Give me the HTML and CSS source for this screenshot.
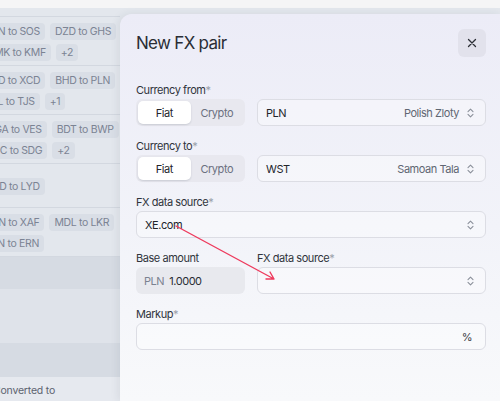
FILE: index.html
```html
<!DOCTYPE html>
<html lang="en">
<head>
    <meta charset="UTF-8">
    <meta name="viewport" content="width=device-width, initial-scale=1.0">
    <title>New FX pair</title>
    <link rel="stylesheet" href="styles.css">
</head>
<body>

    <div class="topbar"></div>

    <!-- Pairs table behind the drawer -->
    <div class="pairs">
        <div class="pair-row pair-head"></div>
        <div class="pair-row">
            <div class="tag-line"><span class="tag">AFN to SOS</span><span class="tag">DZD to GHS</span></div>
            <div class="tag-line"><span class="tag">MMK to KMF</span><span class="tag">+2</span></div>
        </div>
        <div class="pair-row">
            <div class="tag-line"><span class="tag">BSD to XCD</span><span class="tag">BHD to PLN</span></div>
            <div class="tag-line"><span class="tag">ALL to TJS</span><span class="tag">+1</span></div>
        </div>
        <div class="pair-row">
            <div class="tag-line"><span class="tag">MGA to VES</span><span class="tag">BDT to BWP</span></div>
            <div class="tag-line"><span class="tag">CUC to SDG</span><span class="tag">+2</span></div>
        </div>
        <div class="pair-row single">
            <div class="tag-line"><span class="tag">AUD to LYD</span></div>
        </div>
        <div class="pair-row">
            <div class="tag-line"><span class="tag">AZN to XAF</span><span class="tag">MDL to LKR</span></div>
            <div class="tag-line"><span class="tag">BTN to ERN</span></div>
        </div>
        <div class="band dark"></div>
        <div class="band light"></div>
        <div class="band dark short"></div>
        <div class="band foot"><span class="foot-text">Converted to</span></div>
    </div>

    <aside class="drawer">
        <div class="drawer-head">
            <h2 class="drawer-title">New FX pair</h2>
            <button class="close-btn" aria-label="Close">
                <svg width="10" height="10" viewBox="0 0 10 10">
                    <path d="M1.5 1.5L8.5 8.5M8.5 1.5L1.5 8.5" stroke="#2c2f36" stroke-width="1.3" stroke-linecap="round"/>
                </svg>
            </button>
        </div>

        <div class="form">
            <div class="field">
                <div class="field-label">Currency from<span class="req">*</span></div>
                <div class="split">
                    <div class="segmented">
                        <span class="seg active">Fiat</span>
                        <span class="seg">Crypto</span>
                    </div>
                    <div class="select">
                        <span class="select-code">PLN</span>
                        <span class="select-name">Polish Zloty</span>
                        <svg class="chevron" width="7" height="10" viewBox="0 0 7 10">
                            <path d="M1 3.6L3.5 1.2L6 3.6M1 6.4L3.5 8.8L6 6.4" fill="none" stroke="#8b909a" stroke-width="1.1" stroke-linecap="round" stroke-linejoin="round"/>
                        </svg>
                    </div>
                </div>
            </div>

            <div class="field">
                <div class="field-label">Currency to<span class="req">*</span></div>
                <div class="split">
                    <div class="segmented">
                        <span class="seg active">Fiat</span>
                        <span class="seg">Crypto</span>
                    </div>
                    <div class="select">
                        <span class="select-code">WST</span>
                        <span class="select-name">Samoan Tala</span>
                        <svg class="chevron" width="7" height="10" viewBox="0 0 7 10">
                            <path d="M1 3.6L3.5 1.2L6 3.6M1 6.4L3.5 8.8L6 6.4" fill="none" stroke="#8b909a" stroke-width="1.1" stroke-linecap="round" stroke-linejoin="round"/>
                        </svg>
                    </div>
                </div>
            </div>

            <div class="field">
                <div class="field-label">FX data source<span class="req">*</span></div>
                <div class="select">
                    <span class="select-code">XE.com</span>
                    <svg class="chevron" width="7" height="10" viewBox="0 0 7 10">
                        <path d="M1 3.6L3.5 1.2L6 3.6M1 6.4L3.5 8.8L6 6.4" fill="none" stroke="#8b909a" stroke-width="1.1" stroke-linecap="round" stroke-linejoin="round"/>
                    </svg>
                </div>
            </div>

            <div class="split">
                <div class="field">
                    <div class="field-label">Base amount</div>
                    <div class="amount">
                        <span class="amount-cur">PLN</span>
                        <span class="amount-val">1.0000</span>
                    </div>
                </div>
                <div class="field">
                    <div class="field-label">FX data source<span class="req">*</span></div>
                    <div class="select">
                        <svg class="chevron" width="7" height="10" viewBox="0 0 7 10">
                            <path d="M1 3.6L3.5 1.2L6 3.6M1 6.4L3.5 8.8L6 6.4" fill="none" stroke="#8b909a" stroke-width="1.1" stroke-linecap="round" stroke-linejoin="round"/>
                        </svg>
                    </div>
                </div>
            </div>

            <div class="field">
                <div class="field-label">Markup<span class="req">*</span></div>
                <div class="select">
                    <span class="suffix">%</span>
                </div>
            </div>
        </div>
    </aside>

    <!-- annotation arrow -->
    <svg class="pointer" width="500" height="401" viewBox="0 0 500 401">
        <path d="M176 226L274 279M274 279L266 279M274 279L270 272" fill="none" stroke="#ee3a5d" stroke-width="1.4" stroke-linecap="round" stroke-linejoin="round"/>
    </svg>

</body>
</html>
```

FILE: styles.css
```css
/* Base */
* {
    box-sizing: border-box;
}

body {
    margin: 0;
    width: 500px;
    height: 401px;
    overflow: hidden;
    position: relative;
    font-family: Inter, "Noto Sans", sans-serif;
    background-color: #e3e7ed;
    color: #2b2e36;
}

.topbar {
    height: 8px;
    background-color: #f5f5f6;
}

/* Pairs table */
.pairs {
    width: 120px;
    overflow: hidden;
}

.pair-row {
    border-bottom: 1px solid #d3d8e0;
    padding: 6px 0 4px;
    display: flex;
    flex-direction: column;
    gap: 4px;
}

.pair-head {
    height: 9px;
    padding: 0;
}

.pair-row.single {
    padding: 14px 0 12px;
}

.tag-line {
    display: flex;
    gap: 5px;
    margin-left: -20px;
}

.tag {
    height: 17px;
    line-height: 17px;
    padding: 0 5px;
    border-radius: 4px;
    background-color: #d9dee6;
    color: #7b8393;
    font-size: 10.5px;
    letter-spacing: -0.35px;
    white-space: nowrap;
}

.band {
    height: 32px;
}

.band.dark {
    background-color: #d6dbe3;
}

.band.short {
    height: 34px;
}

.band.light {
    height: 54px;
    background-color: #dfe3ea;
}

.band.foot {
    height: 30px;
    background-color: #e6e9ef;
    padding-top: 7px;
}

.foot-text {
    display: block;
    margin-left: -7px;
    font-size: 10.5px;
    letter-spacing: -0.2px;
    color: #5c6370;
}

/* Drawer */
.drawer {
    position: absolute;
    left: 120px;
    top: 14px;
    right: 0;
    bottom: 0;
    border-radius: 12px 0 0 0;
    background: linear-gradient(180deg, #ececf7 0%, #f2f3f9 55%, #f8f9fb 100%);
    box-shadow: -2px 0 8px rgba(40, 50, 70, 0.08);
    letter-spacing: -0.45px;
}

.drawer-head {
    display: flex;
    justify-content: space-between;
    align-items: center;
    padding: 15px 14px 0 16px;
}

.drawer-title {
    margin: 0;
    font-size: 17px;
    font-weight: 400;
    line-height: 28px;
    letter-spacing: -0.7px;
    color: #2a2d35;
}

.close-btn {
    width: 28px;
    height: 28px;
    border: none;
    border-radius: 6px;
    background-color: #e2e2ec;
    display: flex;
    align-items: center;
    justify-content: center;
    padding: 0;
}

.form {
    padding: 26px 14px 0 16px;
}

.field {
    margin-bottom: 13px;
}

.field-label {
    font-size: 11px;
    line-height: 14px;
    margin-bottom: 2px;
    color: #30343c;
}

.req {
    color: #9ba0aa;
}

.split {
    display: grid;
    grid-template-columns: 109px 1fr;
    gap: 12px;
}

.split .field {
    min-width: 0;
}

/* Fiat / Crypto toggle */
.segmented {
    height: 27px;
    padding: 2px;
    border-radius: 6px;
    background-color: #e8e8ef;
    display: grid;
    grid-template-columns: 1fr 1fr;
}

.seg {
    display: flex;
    align-items: center;
    justify-content: center;
    font-size: 11px;
    color: #6b7080;
    border-radius: 5px;
}

.seg.active {
    background-color: #fff;
    color: #23262d;
    box-shadow: 0 1px 2px rgba(30, 40, 60, 0.15);
}

/* Select-like inputs */
.select {
    height: 27px;
    border: 1px solid #dcdde4;
    border-radius: 6px;
    background-color: rgba(255, 255, 255, 0.35);
    display: flex;
    align-items: center;
    padding: 0 11px 0 8px;
    font-size: 11px;
}

.select-code {
    color: #22252b;
}

.select-name {
    margin-left: auto;
    color: #606672;
}

.chevron {
    margin-left: 8px;
    flex-shrink: 0;
}

.select-code + .chevron {
    margin-left: auto;
}

.select > .chevron:only-child,
.suffix {
    margin-left: auto;
}

.suffix {
    color: #3b3f47;
    margin-right: 2px;
}

.amount {
    height: 27px;
    border-radius: 6px;
    background-color: #e8e9ee;
    display: flex;
    align-items: center;
    padding: 0 8px;
    font-size: 11px;
    gap: 5px;
}

.amount-cur {
    color: #7b8290;
}

.amount-val {
    color: #2a2d35;
}

.pointer {
    position: absolute;
    left: 0;
    top: 0;
    pointer-events: none;
}
```
